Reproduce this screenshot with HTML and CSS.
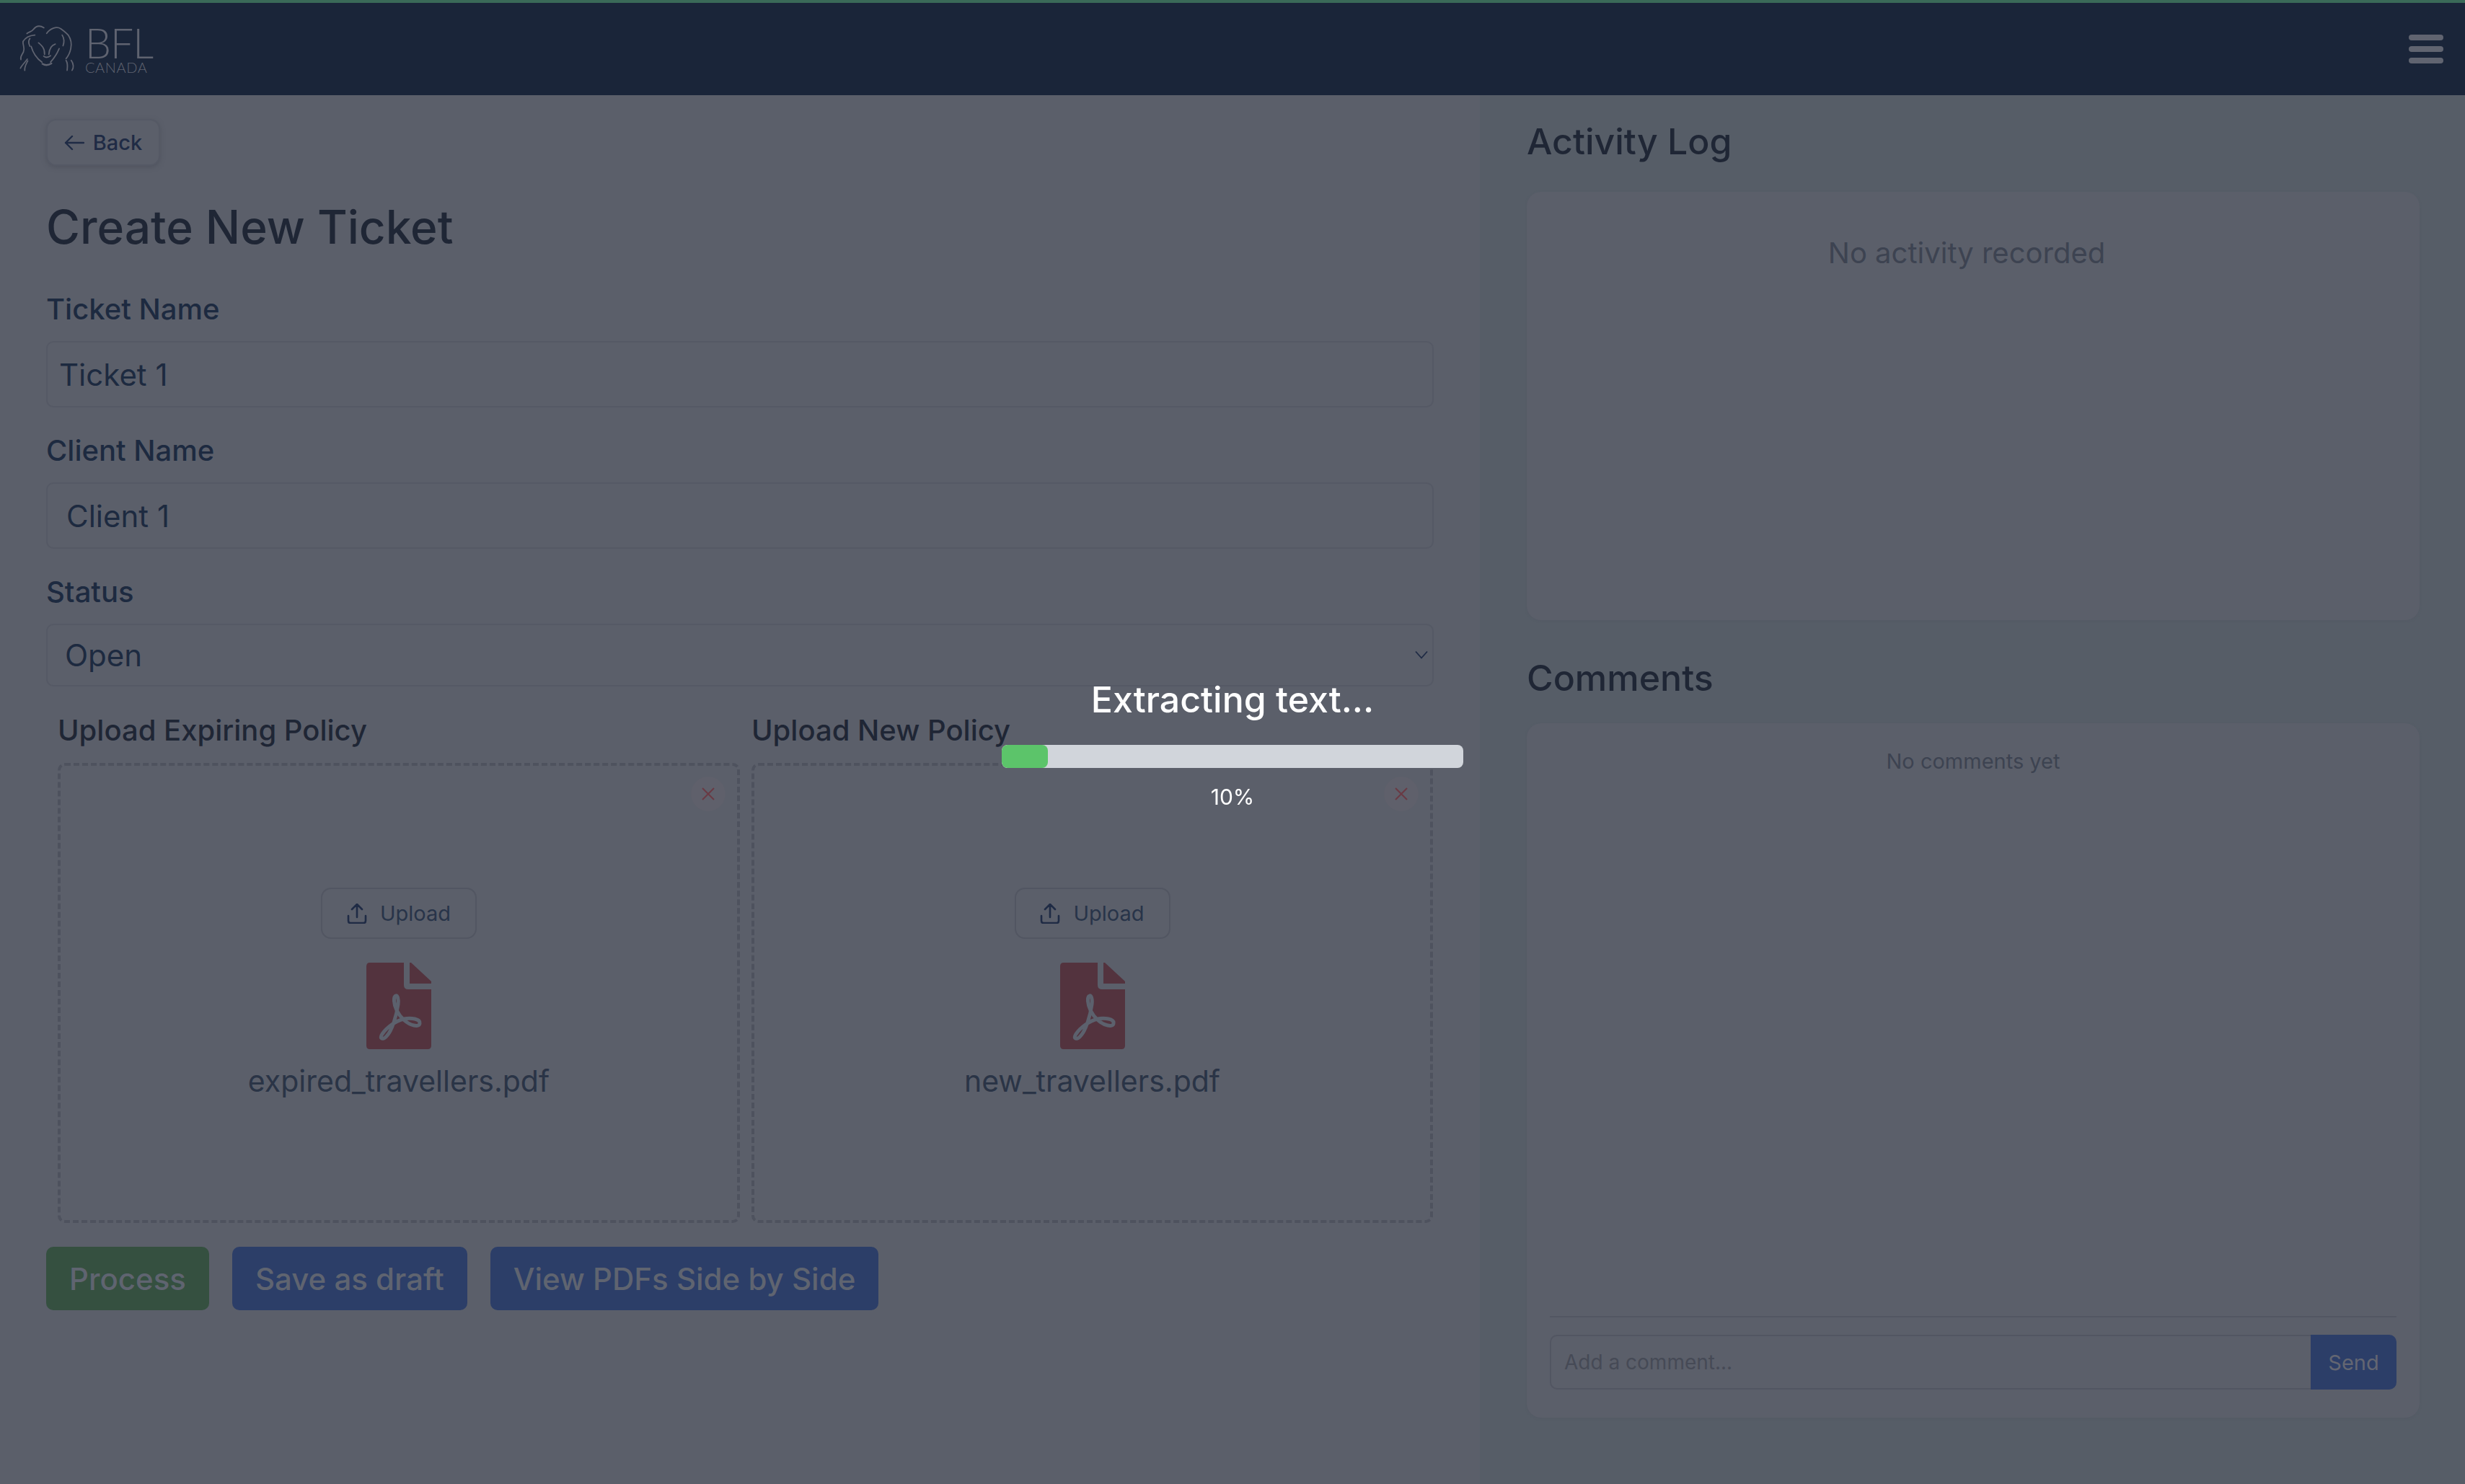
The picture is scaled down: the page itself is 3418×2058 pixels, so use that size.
FILE: index.html
```html
<!DOCTYPE html>
<html lang="en">
<head>
<meta charset="utf-8">
<title>Create New Ticket</title>
<link rel="stylesheet" href="styles.css">
</head>
<body>
<header class="topbar">
  <div class="brand">
    <svg class="lion" viewBox="0 0 285 264" fill="none" stroke="#5f6370" stroke-width="6" stroke-linecap="round" stroke-linejoin="round">
      <path d="M58 65C70 55 80 58 88 46C100 30 118 26 137 38"/>
      <path d="M150 64C165 42 195 30 215 42C226 50 240 60 250 72C262 90 268 110 262 135C258 155 250 170 240 182"/>
      <path d="M95 72C70 74 52 82 40 102C38 120 50 130 42 150C36 165 26 170 30 186"/>
      <path d="M72 88C62 100 66 112 72 124"/>
      <path d="M222 72C232 88 232 105 226 122"/>
      <path d="M78 125C85 150 100 178 128 198"/>
      <path d="M208 135C198 160 184 180 168 198"/>
      <path d="M112 108C128 122 142 134 140 162"/>
      <path d="M190 114C170 120 162 136 160 162"/>
      <path d="M136 170Q150 182 168 168"/>
      <path d="M130 206Q150 218 172 204" stroke-width="8"/>
      <path d="M28 226C36 210 52 196 60 184"/>
      <path d="M48 236C46 220 56 204 62 192"/>
      <path d="M240 190C250 205 246 225 245 236"/>
      <path d="M264 190C276 205 276 225 268 236"/>
    </svg>
    <div class="wordmark">
      <span class="wordmark-main">BFL</span>
      <span class="wordmark-sub">CANADA</span>
    </div>
  </div>
  <button class="menu" type="button" aria-label="Menu"><i></i><i></i><i></i></button>
</header>

<main class="layout">
  <section class="form-col">
    <button class="back" type="button">
      <svg class="back-icon" viewBox="0 0 28 22" fill="none" stroke="#1f2b45" stroke-width="2.4" stroke-linecap="round" stroke-linejoin="round"><path d="M27 11H2M11 2 2 11l9 9"/></svg>
      Back
    </button>
    <h1 class="title">Create New Ticket</h1>

    <div class="field field-first">
      <label class="label">Ticket Name</label>
      <input class="control control-ticket" value="Ticket 1">
    </div>
    <div class="field">
      <label class="label">Client Name</label>
      <input class="control control-client" value="Client 1">
    </div>
    <div class="field">
      <label class="label">Status</label>
      <div class="select-wrap">
        <select class="control control-select"><option>Open</option></select>
        <svg class="chevron" viewBox="0 0 18 12" fill="none" stroke="#1f2b45" stroke-width="1.8"><path d="M1 1.5 9 10.5 17 1.5"/></svg>
      </div>
    </div>

    <div class="uploads">
      <div class="upload">
        <div class="upload-label">Upload Expiring Policy</div>
        <div class="dropzone">
          <button class="remove" type="button" aria-label="Remove"><svg viewBox="0 0 18 18" fill="none" stroke="#6a3a44" stroke-width="2"><path d="M1 1 17 17M17 1 1 17"/></svg></button>
          <button class="upload-btn" type="button">
            <svg class="upload-icon" viewBox="0 0 28 28" fill="none" stroke="#1f2b45" stroke-width="2.6" stroke-linecap="round" stroke-linejoin="round"><path d="M14 19V2M7 8l7-7 7 7M2 17v7q0 3 3 3h18q3 0 3-3v-7"/></svg>
            Upload
          </button>
          <svg class="pdf" viewBox="0 0 90 120">
            <path fill="#53333e" d="M5 0H52V31Q52 37 58 37H90V115Q90 120 85 120H5Q0 120 0 115V5Q0 0 5 0Z"/>
            <path fill="#53333e" d="M60 0H62L90 26V29H60Z"/>
            <path fill="none" stroke="#5c616d" stroke-width="5" d="M74 84C75 78 62 76 52 78C40 81 28 90 22 99C17 106 24 107 28 102C36 94 42 72 44 58C45 50 43 45 41 46C37 47 38 58 42 66C47 76 56 85 66 87C71 88 74 87 74 84Z"/>
          </svg>
          <div class="filename">expired_travellers.pdf</div>
        </div>
      </div>
      <div class="upload">
        <div class="upload-label">Upload New Policy</div>
        <div class="dropzone">
          <button class="remove" type="button" aria-label="Remove"><svg viewBox="0 0 18 18" fill="none" stroke="#6a3a44" stroke-width="2"><path d="M1 1 17 17M17 1 1 17"/></svg></button>
          <button class="upload-btn" type="button">
            <svg class="upload-icon" viewBox="0 0 28 28" fill="none" stroke="#1f2b45" stroke-width="2.6" stroke-linecap="round" stroke-linejoin="round"><path d="M14 19V2M7 8l7-7 7 7M2 17v7q0 3 3 3h18q3 0 3-3v-7"/></svg>
            Upload
          </button>
          <svg class="pdf" viewBox="0 0 90 120">
            <path fill="#53333e" d="M5 0H52V31Q52 37 58 37H90V115Q90 120 85 120H5Q0 120 0 115V5Q0 0 5 0Z"/>
            <path fill="#53333e" d="M60 0H62L90 26V29H60Z"/>
            <path fill="none" stroke="#5c616d" stroke-width="5" d="M74 84C75 78 62 76 52 78C40 81 28 90 22 99C17 106 24 107 28 102C36 94 42 72 44 58C45 50 43 45 41 46C37 47 38 58 42 66C47 76 56 85 66 87C71 88 74 87 74 84Z"/>
          </svg>
          <div class="filename">new_travellers.pdf</div>
        </div>
      </div>
    </div>

    <div class="actions">
      <button class="action action-green" type="button">Process</button>
      <button class="action action-blue" type="button">Save as draft</button>
      <button class="action action-blue" type="button">View PDFs Side by Side</button>
    </div>
  </section>

  <aside class="side-col">
    <h2 class="side-title">Activity Log</h2>
    <div class="card card-activity">
      <p class="empty-activity">No activity recorded</p>
    </div>
    <h2 class="side-title side-title-comments">Comments</h2>
    <div class="card card-comments">
      <p class="empty-comments">No comments yet</p>
      <div class="composer">
        <input class="comment-input" placeholder="Add a comment...">
        <button class="send" type="button">Send</button>
      </div>
    </div>
  </aside>
</main>

<div class="overlay">
  <div class="progress">
    <div class="progress-title">Extracting text...</div>
    <div class="track"><div class="fill" style="width:10%"></div></div>
    <div class="percent">10%</div>
  </div>
</div>
</body>
</html>
```
FILE: styles.css
```css
* { box-sizing: border-box; }
html, body { margin: 0; height: 2058px; overflow: hidden; }
body { font-family: Inter, "Noto Sans", sans-serif; background: #5b5f6a; color: #1f2635; }
button, input, select { font-family: inherit; }

.topbar { height: 132px; background: #1a2539; border-top: 4px solid #3a6a58; display: flex; align-items: center; justify-content: space-between; padding: 0 30px 0 24px; }
.brand { display: flex; align-items: center; gap: 13px; }
.lion { width: 85px; height: 79px; margin-top: -4px; margin-left: -4px; }
.wordmark { display: flex; flex-direction: column; color: #5f6370; font-family: Lato, sans-serif; font-weight: 300; }
.wordmark-main { font-size: 57px; line-height: 50px; letter-spacing: -1px; }
.wordmark-sub { font-size: 20px; line-height: 18px; letter-spacing: .6px; }
.menu { width: 48px; height: 40px; padding: 0; border: 0; background: none; display: flex; flex-direction: column; justify-content: space-between; }
.menu i { display: block; height: 8px; border-radius: 4px; background: #606470; }

.layout { display: flex; height: 1926px; }
.form-col { width: 2052px; padding: 33px 64px 0; }
.side-col { flex: 1; background: #565d67; padding: 34px 63px 0 65px; }

.back { width: 158px; height: 65px; display: flex; align-items: center; justify-content: center; gap: 12px; padding: 0; border: 2px solid #555965; border-radius: 14px; background: #5b5f6a; box-shadow: 0 2px 6px #50545f; color: #1f2b45; font-size: 29px; font-weight: 500; }
.back-icon { width: 28px; height: 22px; }
.title { margin: 49px 0 0; font-size: 64px; line-height: 72px; font-weight: 500; color: #1f2635; }

.field { margin-top: 36px; }
.field-first { margin-top: 54px; }
.label { display: block; height: 48px; margin-bottom: 20px; font-size: 40px; line-height: 48px; font-weight: 500; color: #1d2a40; }
.control { display: block; width: 100%; height: 92px; border: 2px solid #555965; border-radius: 10px; background: #5b5f6a; color: #1d2a40; font-size: 42px; font-weight: 400; outline: 0; }
.control-ticket { padding: 0 16px; }
.control-client { padding: 0 26px; }
.control-select { height: 87px; padding: 0 24px; appearance: none; }
.select-wrap { position: relative; }
.chevron { position: absolute; right: 8px; top: 37px; width: 18px; height: 12px; }

.uploads { display: grid; grid-template-columns: 946px 945px; gap: 16px; margin-top: 37px; padding-left: 16px; }
.upload-label { height: 48px; margin-bottom: 21px; font-size: 40px; line-height: 48px; font-weight: 500; color: #1f2635; }
.dropzone { position: relative; height: 638px; padding-top: 169px; border: 4px dashed #4e525e; border-radius: 10px; display: flex; flex-direction: column; align-items: center; }
.remove { position: absolute; top: 15px; right: 16px; width: 48px; height: 48px; padding: 0; border: 0; border-radius: 50%; background: #5f606b; display: flex; align-items: center; justify-content: center; }
.remove svg { width: 18px; height: 18px; }
.upload-btn { width: 216px; height: 71px; display: flex; align-items: center; justify-content: center; gap: 18px; padding: 0; border: 2px solid #525662; border-radius: 14px; background: #5b5f6a; color: #283449; font-size: 29px; }
.upload-icon { width: 28px; height: 28px; }
.pdf { width: 90px; height: 120px; margin-top: 33px; }
.filename { margin-top: 20px; height: 48px; font-size: 41px; line-height: 48px; color: #2a3446; }

.actions { display: flex; gap: 32px; margin-top: 33px; }
.action { height: 88px; padding: 0 32px; border: 0; border-radius: 10px; color: #5f6470; font-size: 42px; font-weight: 500; }
.action-green { background: #355040; }
.action-blue { background: #2c3e68; }

.side-title { margin: 0; height: 60px; font-size: 50px; line-height: 60px; font-weight: 500; color: #1f2635; }
.side-title-comments { margin-top: 50px; }
.card { background: #5b5f6a; border-radius: 20px; box-shadow: 0 1px 3px #545a65; margin-top: 40px; }
.card-activity { height: 594px; padding: 0 18px 0 0; text-align: center; }
.empty-activity { margin: 0; padding-top: 61px; font-size: 40px; line-height: 48px; color: #3d4351; }
.card-comments { height: 963px; margin-top: 33px; padding: 0 32px 32px; display: flex; flex-direction: column; justify-content: space-between; text-align: center; }
.empty-comments { margin: 0; padding-top: 35px; font-size: 29px; line-height: 36px; color: #3d4351; }
.composer { display: flex; height: 109px; padding-top: 24px; border-top: 2px solid #525662; }
.comment-input { flex: 1; height: 76px; padding: 0 18px; border: 2px solid #525662; border-right: 0; border-radius: 10px 0 0 10px; background: #5b5f6a; font-size: 28px; outline: 0; }
.comment-input::placeholder { color: #464a56; }
.send { width: 119px; height: 76px; padding: 0; border: 0; border-radius: 0 10px 10px 0; background: #2c3e68; color: #636672; font-size: 29px; }

.overlay { position: fixed; inset: 0; display: flex; align-items: center; justify-content: center; }
.progress { width: 640px; margin-top: 2px; text-align: center; color: #fff; }
.progress-title { height: 60px; font-size: 50px; line-height: 60px; font-weight: 500; }
.track { height: 32px; margin-top: 33px; border-radius: 8px; background: #d1d5db; overflow: hidden; }
.fill { height: 100%; border-radius: 8px; background: #5cc46a; }
.percent { height: 32px; margin-top: 24px; font-size: 30px; line-height: 32px; }
```
